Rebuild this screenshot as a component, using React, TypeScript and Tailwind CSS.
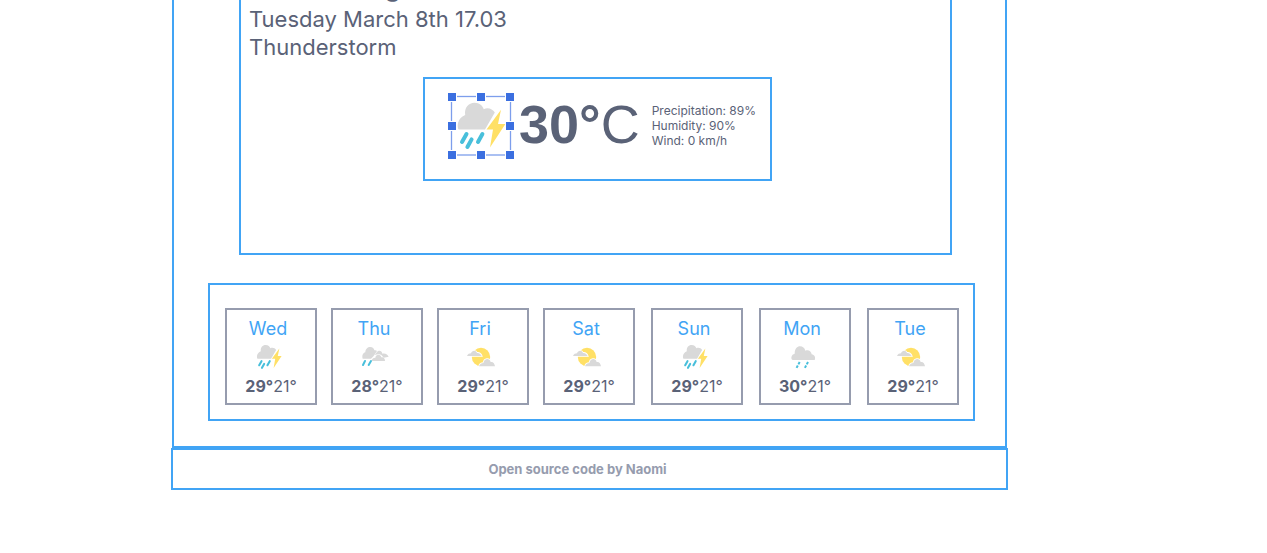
type IconKind = "storm" | "showers" | "partly" | "rain";

const CLOUD = "#d9d9d9";
const SUN = "#ffe066";
const DROP = "#48bfdb";

function StormShapes() {
  return (
    <>
      <path
        d="M6.6 32.5C4.9 30 5 21 13.2 18C12 11 16.5 5.7 22.5 5.7C27.5 5.7 31 9 31.7 12.3C36 10 40.5 12 42.8 15.6L33 32.5Z"
        fill={CLOUD}
      />
      <path d="M49 12.8L34.5 32.5H41L38 50.5L53.4 27H46Z" fill={SUN} />
      <g stroke={DROP} strokeWidth="4" strokeLinecap="round">
        <path d="M14.5 37L10 45" />
        <path d="M19.6 42.4L15.4 50" />
        <path d="M30.4 37L26 45" />
      </g>
    </>
  );
}

function WeatherIcon({ kind }: { kind: IconKind }) {
  if (kind === "storm") {
    return (
      <svg viewBox="0 0 58 58" className="size-[30px]" fill="none" aria-hidden="true">
        <StormShapes />
      </svg>
    );
  }
  return (
    <svg viewBox="0 0 90 90" className="size-[30px]" fill="none" aria-hidden="true">
      {kind === "showers" && (
        <>
          <path d="M8 50C5 40 9 33 16 31C16 21 23 15 31 15C38 15 42 19 43 25C46 24 49 25 51 27L41 42L33 50Z" fill={CLOUD} />
          <path d="M44 39L51 30C56 23 66 26 67 35C77 33 83 38 86 44L71 47C66 39 60 33 44 39Z" fill={CLOUD} />
          <path d="M35 57C35 51 39 47 46 47C48 37 60 35 64 46C71 44 75 50 75 57Z" fill={CLOUD} />
          <g stroke={DROP} strokeWidth="6" strokeLinecap="round">
            <path d="M15 57L9 69" />
            <path d="M33 57L26 69" />
          </g>
        </>
      )}
      {kind === "partly" && (
        <>
          <circle cx="45" cy="45" r="27.5" fill={SUN} />
          <path d="M3 42C5 36 11 34 15 34C18 24 30 24 33 33C39 32 45 37 47 42Z" fill={CLOUD} stroke="#fff" strokeWidth="5" paintOrder="stroke" />
          <path d="M39 73C41 65 47 63 52 63C55 49 70 47 74 60C81 58 86 65 87 73Z" fill={CLOUD} stroke="#fff" strokeWidth="5" paintOrder="stroke" />
        </>
      )}
      {kind === "rain" && (
        <>
          <path d="M14 54C7 50 10 37 20 35C20 19 28 13 36 13C44 13 50 18 52 26C62 22 70 28 71 37C79 38 84 46 80 54Z" fill={CLOUD} />
          <g stroke={DROP} strokeWidth="6" strokeDasharray="8 4">
            <path d="M35 60L25 79" />
            <path d="M60 60L50 79" />
          </g>
        </>
      )}
    </svg>
  );
}

function SelectedStormIcon() {
  const stops = [5, 34, 63];
  return (
    <svg viewBox="0 0 68 68" className="size-[68px] shrink-0" fill="none" role="img" aria-label="Thunderstorm">
      <g transform="translate(5 5)">
        <StormShapes />
      </g>
      <rect x="4.5" y="4.5" width="59" height="58.5" stroke="#7d9eec" strokeWidth="1.3" />
      {stops.flatMap((x) =>
        stops
          .filter((y) => x !== 34 || y !== 34)
          .map((y) => (
            <rect key={`${x}-${y}`} x={x - 4.5} y={y - 4.5} width="9" height="9" fill="#3b6fe0" stroke="#fff" strokeWidth="1" />
          )),
      )}
    </svg>
  );
}

type Day = { name: string; icon: IconKind; high: number; low: number };

const earlyDays: Day[] = [
  { name: "Wed", icon: "storm", high: 29, low: 21 },
  { name: "Thu", icon: "showers", high: 28, low: 21 },
  { name: "Fri", icon: "partly", high: 29, low: 21 },
  { name: "Sat", icon: "partly", high: 29, low: 21 },
];

const lateDays: Day[] = [
  { name: "Sun", icon: "storm", high: 29, low: 21 },
  { name: "Mon", icon: "rain", high: 30, low: 21 },
  { name: "Tue", icon: "partly", high: 29, low: 21 },
];

function DayCard({ day }: { day: Day }) {
  return (
    <li className="flex flex-1 flex-col items-center border-2 border-[#969cae] pt-[7px] pb-[7px]">
      <h2 className="pr-[6px] text-[18px] leading-6 text-[#41a4f5]">{day.name}</h2>
      <div className="mt-px pr-1">
        <WeatherIcon kind={day.icon} />
      </div>
      <p className="mt-1 text-[16px] leading-5">
        <strong>{day.high}°</strong>
        {day.low}°
      </p>
    </li>
  );
}

export default function App() {
  return (
    <div className="overflow-hidden bg-white pr-[259px] pl-[171px] font-[Inter,'Liberation_Sans',sans-serif] text-[#5a6277]">
      <main className="mr-px ml-px border-2 border-t-0 border-[#41a4f5] px-[34px] pb-[25px]">
        <section className="mr-[19px] ml-[31px] border-2 border-t-0 border-[#41a4f5] px-2 pb-[72px]">
          <h1 className="-mt-[29px] pb-[2px] text-[26px] leading-8 font-bold">Gothenburg</h1>
          <p className="text-[22px] leading-7">Tuesday March 8th 17.03</p>
          <p className="text-[22px] leading-7">Thunderstorm</p>
          <div className="mt-4 flex justify-center pl-1">
            <div className="flex w-[349px] items-start border-2 border-[#41a4f5] pt-[13px] pb-[19px] pl-[22px]">
              <SelectedStormIcon />
              <p className="ml-1 font-['Liberation_Sans',Arial,sans-serif] text-[54px] leading-[64px] whitespace-nowrap">
                <strong>30°</strong>C
              </p>
              <ul className="mt-[11px] ml-3 text-[12px] leading-[15px] whitespace-nowrap">
                <li>Precipitation: 89%</li>
                <li>Humidity: 90%</li>
                <li>Wind: 0 km/h</li>
              </ul>
            </div>
          </div>
        </section>
        <section className="mt-7 -mr-1 flex gap-4 border-2 border-[#41a4f5] pt-[23px] pr-[14px] pb-[14px] pl-[15px]">
          <ul className="flex flex-[410] gap-[14px]">
            {earlyDays.map((day) => (
              <DayCard key={day.name} day={day} />
            ))}
          </ul>
          <ul className="flex flex-[308] gap-4">
            {lateDays.map((day) => (
              <DayCard key={day.name} day={day} />
            ))}
          </ul>
        </section>
      </main>
      <footer className="border-2 border-[#41a4f5] py-2 pr-6 text-center text-[13px] leading-[22px] font-bold text-[#969cae]">
        Open source code by Naomi
      </footer>
    </div>
  );
}
